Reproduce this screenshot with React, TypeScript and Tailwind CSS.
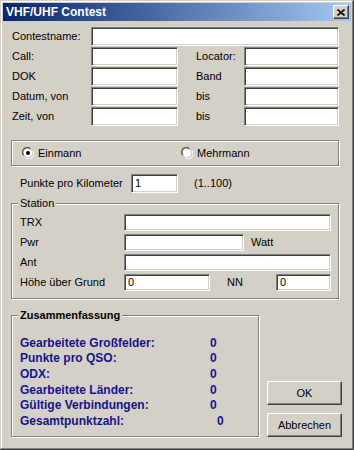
import React from 'react';

// Win2k style 3D borders
const sunken =
	'bg-white border border-t-[#808080] border-l-[#808080] border-b-white border-r-white shadow-[inset_1px_1px_0_#404040,inset_-1px_-1px_0_#d4d0c8]';
const raised =
	'bg-[#d4d0c8] border border-t-white border-l-white border-b-[#404040] border-r-[#404040] shadow-[inset_-1px_-1px_0_#808080]';
const etched = 'border border-[#808080] shadow-[inset_1px_1px_0_#fff,1px_1px_0_#fff]';

const Input: React.FC<{ w: string; h?: string; value?: string }> = ({ w, h = 'h-[19px]', value }) => (
	<div className={`${sunken} ${w} ${h} flex items-center pl-[3px] text-black`}>{value}</div>
);

const Radio: React.FC<{ checked?: boolean }> = ({ checked }) => (
	<svg width="12" height="12" viewBox="0 0 12 12">
		<path d="M1 8 A5 5 0 0 1 8 1" fill="none" stroke="#808080" strokeWidth="1" />
		<path d="M2 8.5 A4.2 4.2 0 0 1 8.5 2" fill="none" stroke="#404040" strokeWidth="1" />
		<circle cx="6" cy="6" r="4" fill="#fff" />
		<path d="M11 4 A5 5 0 0 1 4 11" fill="none" stroke="#fff" strokeWidth="1" />
		{checked && <circle cx="6" cy="6" r="2" fill="#000" />}
	</svg>
);

const SUMMARY = [
	['Gearbeitete Großfelder:', '0'],
	['Punkte pro QSO:', '0'],
	['ODX:', '0'],
	['Gearbeitete Länder:', '0'],
	['Gültige Verbindungen:', '0'],
	['Gesamtpunktzahl:', '0'],
];

const App: React.FC = () => {
	return (
		<div
			className="w-[354px] h-[450px] bg-[#d4d0c8] p-[3px] text-[11px] leading-none text-black shadow-[inset_-1px_-1px_0_#404040,inset_1px_1px_0_#d4d0c8,inset_-2px_-2px_0_#808080,inset_2px_2px_0_#fff]"
			style={{ fontFamily: '"Liberation Sans", Arial, sans-serif' }}
		>
			{/* Title bar */}
			<div className="flex h-[18px] items-center justify-between bg-gradient-to-r from-[#0a246a] to-[#a6caf0] pl-[3px] pr-[2px]">
				<span className="text-[12px] font-bold text-white">VHF/UHF Contest</span>
				<div className={`${raised} flex h-[14px] w-[16px] items-center justify-center`}>
					<svg width="8" height="7" viewBox="0 0 8 7">
						<path d="M0.5 0.5 L7.5 6.5 M7.5 0.5 L0.5 6.5" stroke="#000" strokeWidth="1.6" />
					</svg>
				</div>
			</div>

			<div className="flex flex-col px-[8px] pt-[6px]">
				{/* Header fields */}
				<div className="flex flex-col gap-px">
					<div className="flex h-[19px] items-center">
						<span className="w-[80px] pl-px">Contestname:</span>
						<Input w="w-[248px]" />
					</div>
					{[
						['Call:', 'Locator:'],
						['DOK', 'Band'],
						['Datum, von', 'bis'],
						['Zeit, von', 'bis'],
					].map(([a, b]) => (
						<div key={a} className="flex h-[19px] items-center">
							<span className="w-[80px] pl-px">{a}</span>
							<Input w="w-[87px]" />
							<span className="w-[66px] pl-[18px]">{b}</span>
							<Input w="w-[95px]" />
						</div>
					))}
				</div>

				{/* Einmann / Mehrmann */}
				<div className={`${etched} mt-[14px] flex h-[26px] w-[328px] items-center pl-[10px]`}>
					<Radio checked />
					<span className="ml-[4px] w-[143px]">Einmann</span>
					<Radio />
					<span className="ml-[4px]">Mehrmann</span>
				</div>

				<div className="mt-[8px] flex h-[19px] items-center">
					<span className="w-[120px] pl-[9px]">Punkte pro Kilometer</span>
					<Input w="w-[47px]" value="1" />
					<span className="ml-[16px]">(1..100)</span>
				</div>

				{/* Station */}
				<div className={`${etched} relative mt-[10px] flex h-[96px] w-[328px] flex-col gap-[3px] pl-[8px] pt-[10px]`}>
					<span className="absolute left-[6px] top-[-6px] bg-[#d4d0c8] px-[2px]">Station</span>
					<div className="flex h-[17px] items-center">
						<span className="w-[104px]">TRX</span>
						<Input w="w-[207px]" h="h-[17px]" />
					</div>
					<div className="flex h-[17px] items-center">
						<span className="w-[104px]">Pwr</span>
						<Input w="w-[120px]" h="h-[17px]" />
						<span className="ml-[7px]">Watt</span>
					</div>
					<div className="flex h-[17px] items-center">
						<span className="w-[104px]">Ant</span>
						<Input w="w-[207px]" h="h-[17px]" />
					</div>
					<div className="flex h-[17px] items-center">
						<span className="w-[104px]">Höhe über Grund</span>
						<Input w="w-[86px]" h="h-[17px]" value="0" />
						<span className="w-[66px] pl-[17px]">NN</span>
						<Input w="w-[55px]" h="h-[17px]" value="0" />
					</div>
				</div>

				{/* Summary + buttons */}
				<div className="mt-[16px] flex items-end">
					<div className={`${etched} relative flex h-[122px] w-[248px] flex-col pl-[8px] pt-[19px]`}>
						<span className="absolute left-[6px] top-[-6px] bg-[#d4d0c8] px-[2px] font-bold">Zusammenfassung</span>
						{SUMMARY.map(([label, value], i) => (
							<div key={label} className="flex h-[15.6px] items-center text-[12px] font-bold text-[#14148a]">
								<span className="w-[190px]">{label}</span>
								<span className={i === 5 ? 'ml-[7px]' : ''}>{value}</span>
							</div>
						))}
					</div>
					<div className="ml-[8px] flex flex-col gap-[8px]">
						<button className={`${raised} h-[24px] w-[75px]`}>OK</button>
						<button className={`${raised} h-[24px] w-[75px]`}>Abbrechen</button>
					</div>
				</div>
			</div>
		</div>
	);
};

export default App;
